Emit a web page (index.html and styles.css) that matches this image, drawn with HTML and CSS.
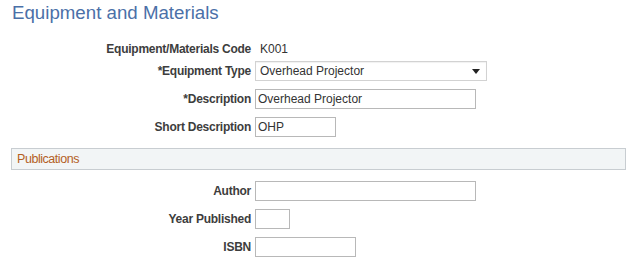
FILE: index.html
```html
<!DOCTYPE html>
<html lang="en">
<head>
    <meta charset="UTF-8">
    <title>Equipment and Materials</title>
    <link rel="stylesheet" href="styles.css">
</head>
<body>
    <h1 class="page-title">Equipment and Materials</h1>

    <div class="form-section">
        <div class="form-row row-first">
            <label class="form-label">Equipment/Materials Code</label>
            <span class="form-value">K001</span>
        </div>
        <div class="form-row">
            <label class="form-label">*Equipment Type</label>
            <div class="select-wrap">
                <div class="select-box">Overhead Projector</div>
                <svg class="select-arrow" width="8" height="5" viewBox="0 0 8 5"><path d="M0 0h8L4 5z" fill="#222"/></svg>
            </div>
        </div>
        <div class="form-row">
            <label class="form-label">*Description</label>
            <input type="text" class="text-input w-desc" value="Overhead Projector">
        </div>
        <div class="form-row">
            <label class="form-label">Short Description</label>
            <input type="text" class="text-input w-short" value="OHP">
        </div>
    </div>

    <div class="group-bar">Publications</div>

    <div class="form-section pub-section">
        <div class="form-row">
            <label class="form-label">Author</label>
            <input type="text" class="text-input w-desc">
        </div>
        <div class="form-row">
            <label class="form-label">Year Published</label>
            <input type="text" class="text-input w-year">
        </div>
        <div class="form-row">
            <label class="form-label">ISBN</label>
            <input type="text" class="text-input w-isbn">
        </div>
    </div>
</body>
</html>
```

FILE: styles.css
```css
:root {
    --title-color: #4b70a8;
    --label-color: #3d3d3d;
    --text-color: #333333;
    --group-color: #b4601f;
    --group-bg: #f2f5f6;
    --group-border: #c8cdd1;
    --input-border: #b8b8b8;
}

body {
    margin: 0;
    padding: 0;
    background: #ffffff;
    font-family: Arial, 'Liberation Sans', sans-serif;
    color: var(--text-color);
}

.page-title {
    margin: 0;
    padding: 2px 0 0 12px;
    font-size: 18.7px;
    line-height: 22px;
    font-weight: normal;
    color: var(--title-color);
}

.form-section {
    margin-top: 15px;
}

.form-row {
    display: flex;
    align-items: center;
    height: 20px;
    margin-top: 8px;
}

.form-row.row-first {
    margin-top: 0;
    margin-bottom: -6px;
}

.form-label {
    width: 255px;
    padding-right: 4px;
    box-sizing: border-box;
    text-align: right;
    font-size: 12px;
    font-weight: bold;
    letter-spacing: -0.25px;
    color: var(--label-color);
}

.form-value {
    padding-left: 5px;
    font-size: 12px;
    color: var(--text-color);
}

.text-input {
    box-sizing: border-box;
    height: 20px;
    margin: 0;
    padding: 0 2px;
    border: 1px solid var(--input-border);
    border-radius: 0;
    font-family: Arial, 'Liberation Sans', sans-serif;
    font-size: 12px;
    color: var(--text-color);
    background: #ffffff;
    outline: none;
}

.w-desc { width: 221px; }
.w-short { width: 81px; }
.w-year { width: 35px; }
.w-isbn { width: 101px; }

.select-wrap {
    position: relative;
    width: 232px;
    height: 20px;
}

.select-box {
    box-sizing: border-box;
    height: 20px;
    padding-left: 4px;
    border: 1px solid #d2d2d2;
    box-shadow: inset 0 1px 1px rgba(0, 0, 0, 0.06);
    font-size: 12px;
    line-height: 18px;
    color: var(--text-color);
}

.select-arrow {
    position: absolute;
    right: 7px;
    top: 8px;
}

.group-bar {
    box-sizing: border-box;
    height: 22px;
    margin: 11px 5px 0 11px;
    padding-left: 5px;
    background: var(--group-bg);
    border: 1px solid var(--group-border);
    font-size: 12.5px;
    line-height: 20px;
    letter-spacing: -0.45px;
    color: var(--group-color);
}

.pub-section {
    margin-top: 0;
    padding-top: 3px;
}
```
